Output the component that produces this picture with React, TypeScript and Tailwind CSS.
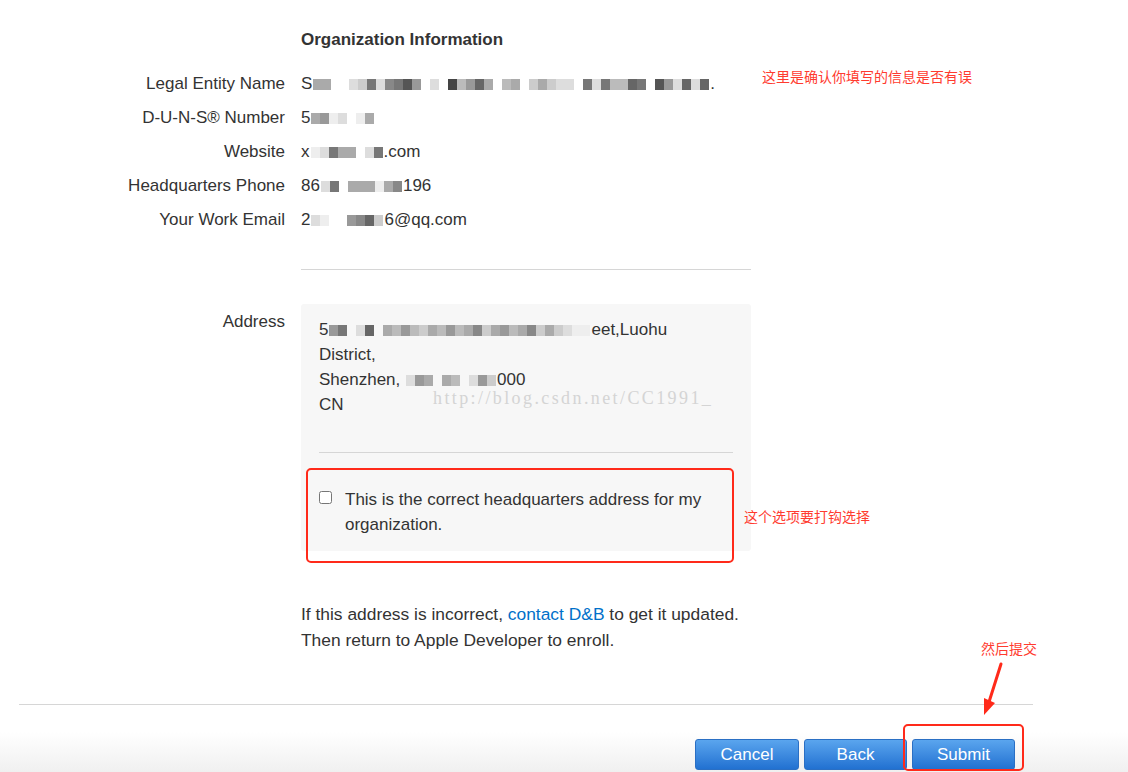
import React from "react"

const font = { fontFamily: '"Liberation Sans", Arial, sans-serif' }
const cjk = { fontFamily: '"Noto Sans CJK SC", sans-serif' }

// pixelated (mosaic) blocks that hide private data in the screenshot
function Pix({ cells }: { cells: string[] }) {
  return (
    <span className="inline-flex items-center align-middle mx-[1px]">
      {cells.map((c, i) => (
        <span key={i} className="inline-block w-[9px] h-[11px]" style={{ background: c || "transparent" }} />
      ))}
    </span>
  )
}

const rows: { label: string; value: React.ReactNode }[] = [
  {
    label: "Legal Entity Name",
    value: (
      <>
        S
        <Pix
          cells={[
            "#aaa", "#aaa", "", "", "#ddd", "#ccc", "#777", "#ddd", "#888", "#777", "#555", "#999", "", "#ddd", "", "#444", "#bbb",
            "#999", "#666", "#aaa", "", "#bbb", "#aaa", "", "#ccc", "#aaa", "#ccc", "#ddd", "#ddd", "", "#777", "#ddd", "#777",
            "#bbb", "#bbb", "#666", "#777", "", "#555", "#999", "#ddd", "#666", "#ddd", "#666",
          ]}
        />
        .
      </>
    ),
  },
  { label: "D-U-N-S® Number", value: <>5<Pix cells={["#aaa", "#999", "#eee", "#ddd", "", "#eee", "#aaa"]} /></> },
  { label: "Website", value: <>x<Pix cells={["#eee", "#ddd", "#777", "#aaa", "#aaa", "", "#ddd", "#777"]} />.com</> },
  { label: "Headquarters Phone", value: <>86<Pix cells={["#ddd", "#777", "", "#aaa", "#aaa", "#aaa", "#eee", "#aaa", "#888"]} />196</> },
  { label: "Your Work Email", value: <>2<Pix cells={["#ddd", "#eee", "", "", "#999", "#888", "#666", "#ccc"]} />6@qq.com</> },
]

export default function App() {
  return (
    <div className="relative w-full h-[772px] overflow-hidden bg-white text-[#333] text-[17px]" style={font}>
      {/* Organization info */}
      <div className="pt-[29px] grid grid-cols-[285px_450px] gap-x-4">
        <div />
        <h2 className="font-bold text-[17px] leading-[22px] text-[#333] mb-[16px]">Organization Information</h2>
        {rows.map((r) => (
          <React.Fragment key={r.label}>
            <div className="text-right leading-[34px] whitespace-nowrap">{r.label}</div>
            <div className="leading-[34px] whitespace-nowrap">{r.value}</div>
          </React.Fragment>
        ))}
        <div />
        <div className="mt-[32px] h-px bg-[#d6d6d6]" />

        {/* Address */}
        <div className="text-right mt-[34px] pt-[6px] leading-[24px]">Address</div>
        <div className="mt-[34px] bg-[#f7f7f7] rounded-[3px] px-[18px] pt-[13px] pb-[14px]">
          <div className="relative leading-[25px] text-[#333]">
            <div className="whitespace-nowrap">
              5
              <Pix
                cells={[
                  "#999", "#777", "", "#ddd", "#666", "", "#aaa", "#bbb", "#999", "#bbb", "#ccc", "#aaa", "#bbb", "#999", "#bbb",
                  "#aaa", "#888", "#ccc", "#aaa", "#999", "#bbb", "#aaa", "#888", "#ccc", "#aaa", "#ccc", "#ddd", "#eee", "#eee",
                ]}
              />
              eet,Luohu
            </div>
            <div>District,</div>
            <div className="whitespace-nowrap">
              Shenzhen, <Pix cells={["#ddd", "#999", "#aaa", "", "#aaa", "#bbb", "", "#ddd", "#999", "#ccc"]} />000
            </div>
            <div>CN</div>
            <div
              className="absolute left-[114px] top-[71px] text-[18px] leading-[20px] tracking-[2.4px] text-[#d4d4d4] whitespace-nowrap"
              style={{ fontFamily: '"Liberation Serif", serif' }}
            >
              http://blog.csdn.net/CC1991_
            </div>
          </div>
          <div className="mt-[35px] h-px bg-[#d6d6d6]" />
          <label className="mt-[34px] flex items-start gap-[13px] leading-[25px]">
            <input type="checkbox" className="mt-[4px] w-[13px] h-[13px] shrink-0" />
            <span>This is the correct headquarters address for my organization.</span>
          </label>
        </div>

        <div />
        <p className="mt-[50px] leading-[26px] text-[17.4px]">
          If this address is incorrect, <span className="text-[#0070c9]">contact D&amp;B</span> to get it updated.
          <br />
          Then return to Apple Developer to enroll.
        </p>
      </div>

      {/* Footer */}
      <div className="absolute left-0 right-0 bottom-0 h-[40px] bg-gradient-to-b from-white to-[#f0f0f0]" />
      <div className="relative mt-[51px] ml-[19px] w-[1014px] h-px bg-[#d6d6d6]" />
      <div className="relative mt-[34px] w-[1015px] flex justify-end gap-[5px]">
        {["Cancel", "Back", "Submit"].map((b) => (
          <button
            key={b}
            className={`${b === "Cancel" ? "w-[104px]" : "w-[103px]"} h-[31px] rounded-[3px] border border-[#2a6fc4] bg-gradient-to-b from-[#5aa5ee] to-[#2171d1] text-white text-[17px]`}
          >
            {b}
          </button>
        ))}
      </div>

      {/* Annotations */}
      <div className="absolute left-[306px] top-[468px] w-[428px] h-[95px] border-2 border-[#ff2a1a] rounded-[5px]" />
      <div className="absolute left-[903px] top-[724px] w-[121px] h-[47px] border-2 border-[#ff2a1a] rounded-[5px]" />
      <div className="absolute left-[762px] top-[66px] text-[14px] text-[#ff3b2f]" style={cjk}>
        这里是确认你填写的信息是否有误
      </div>
      <div className="absolute left-[744px] top-[506px] text-[14px] text-[#ff3b2f]" style={cjk}>
        这个选项要打钩选择
      </div>
      <div className="absolute left-[981px] top-[638px] text-[14px] text-[#ff3b2f]" style={cjk}>
        然后提交
      </div>
      <svg className="absolute left-[975px] top-[660px]" width="32" height="58" viewBox="0 0 32 58">
        <path d="M26 4 L14 42" stroke="#ff2a1a" strokeWidth="3" strokeLinecap="round" />
        <path d="M9 38 L9 55 L20 43 Z" fill="#ff2a1a" />
      </svg>
    </div>
  )
}
